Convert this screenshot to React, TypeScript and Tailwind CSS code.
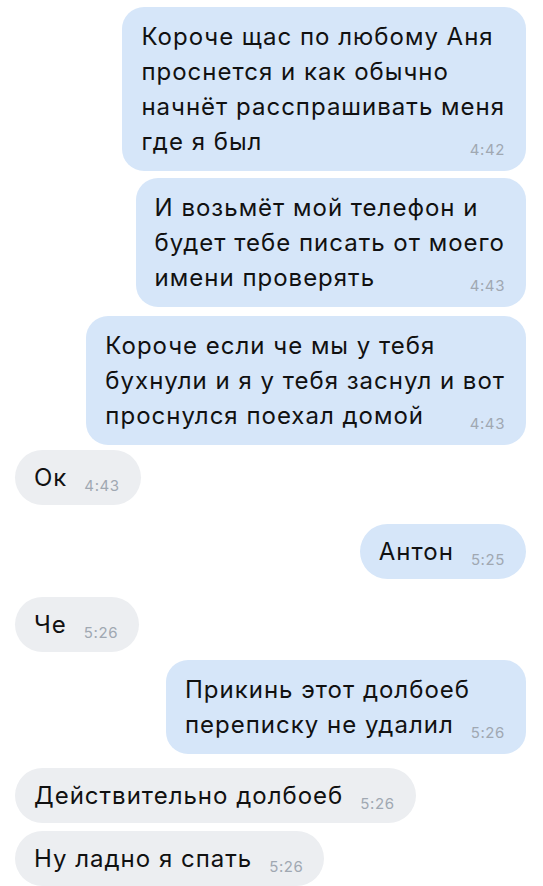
type Msg = {
  out: boolean;
  lines: string[];
  time: string;
  gap: string;
};

const messages: Msg[] = [
  { out: true, gap: "mt-[7px]", time: "4:42", lines: ["Короче щас по любому Аня", "проснется и как обычно", "начнёт расспрашивать меня", "где я был"] },
  { out: true, gap: "mt-[7px]", time: "4:43", lines: ["И возьмёт мой телефон и", "будет тебе писать от моего", "имени проверять"] },
  { out: true, gap: "mt-[9px]", time: "4:43", lines: ["Короче если че мы у тебя", "бухнули и я у тебя заснул и вот", "проснулся поехал домой"] },
  { out: false, gap: "mt-[5px]", time: "4:43", lines: ["Ок"] },
  { out: true, gap: "mt-[19px]", time: "5:25", lines: ["Антон"] },
  { out: false, gap: "mt-[18px]", time: "5:26", lines: ["Че"] },
  { out: true, gap: "mt-[8px]", time: "5:26", lines: ["Прикинь этот долбоеб", "переписку не удалил"] },
  { out: false, gap: "mt-[14px]", time: "5:26", lines: ["Действительно долбоеб"] },
  { out: false, gap: "mt-[8px]", time: "5:26", lines: ["Ну ладно я спать"] },
];

function Bubble({ m }: { m: Msg }) {
  const last = m.lines[m.lines.length - 1];
  const multi = m.lines.length > 1;
  return (
    <div
      className={`${m.gap} w-fit pl-[19px] pr-[21px] ${multi ? "rounded-[22px] py-[12px]" : "rounded-[28px] py-[10px]"} ${
        m.out ? "self-end bg-[#d6e6f9]" : "self-start bg-[#eceef1]"
      }`}
    >
      {m.lines.slice(0, -1).map((l) => (
        <div key={l} className="whitespace-nowrap">
          {l}
        </div>
      ))}
      <div className="flex items-end whitespace-nowrap">
        <span>{last}</span>
        <span className="ml-auto pl-[17px] text-[15px] leading-[18px] tracking-[0.6px] text-[#a0a8b2]">{m.time}</span>
      </div>
    </div>
  );
}

export default function App() {
  return (
    <div className="min-h-screen bg-white">
      <div className="flex flex-col pl-[15px] pr-[17px] font-['Inter',sans-serif] text-[24px] leading-[35px] tracking-[1px] text-[#111111]">
        {messages.map((m, i) => (
          <Bubble key={i} m={m} />
        ))}
      </div>
    </div>
  );
}
